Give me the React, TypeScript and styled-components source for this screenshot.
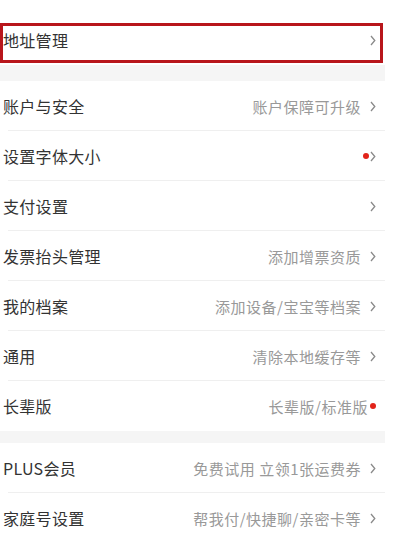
import React from "react";
import styled, { createGlobalStyle } from "styled-components";

const Global = createGlobalStyle`
  html, body { margin: 0; padding: 0; background: #fff; }
  body { font-family: "Noto Sans CJK SC", "Noto Sans", sans-serif; }
`;

const Page = styled.div`
  width: 400px;
  height: 543px;
  overflow: hidden;
  background: #fff;
  padding-top: 15px;
  box-sizing: border-box;
`;

const Column = styled.div`
  width: 385px;
`;

const Band = styled.div<{ $h: number }>`
  height: ${(p) => p.$h}px;
  background: #f5f5f5;
`;

const Row = styled.div<{ $divider?: boolean; $highlight?: boolean }>`
  position: relative;
  height: 50px;
  display: flex;
  align-items: center;
  padding: 0 9px 0 3px;
  box-sizing: border-box;
  background: #fff;
  ${(p) =>
    p.$divider
      ? `&::after { content: ""; position: absolute; left: 8px; right: 0; bottom: 0; height: 1px; background: #efefef; }`
      : ""}
  ${(p) =>
    p.$highlight
      ? `&::before { content: ""; position: absolute; left: 0; right: 2px; top: 8px; bottom: 2px; border: 3px solid #b8161b; box-sizing: border-box; }`
      : ""}
`;

const Label = styled.span`
  flex: 1;
  font-size: 16px;
  color: #333;
  letter-spacing: 0.3px;
`;

const Value = styled.span`
  font-size: 15px;
  color: #999;
  letter-spacing: 0.5px;
`;

const Dot = styled.span`
  width: 6px;
  height: 6px;
  border-radius: 50%;
  background: #e2231a;
  margin-left: 2px;
`;

const ChevronWrap = styled.span<{ $gap: number }>`
  display: inline-flex;
  margin-left: ${(p) => p.$gap}px;
`;

const Chevron = ({ gap = 10 }: { gap?: number }) => (
  <ChevronWrap $gap={gap}>
    <svg width="6" height="11" viewBox="0 0 6 11">
      <polyline points="1,1 4.8,5.5 1,10" fill="none" stroke="#8a8a8a" strokeWidth="1.3" />
    </svg>
  </ChevronWrap>
);

type Item = { label: string; value?: string; dot?: boolean; chevron?: boolean };

const group1: Item[] = [
  { label: "账户与安全", value: "账户保障可升级", chevron: true },
  { label: "设置字体大小", dot: true, chevron: true },
  { label: "支付设置", chevron: true },
  { label: "发票抬头管理", value: "添加增票资质", chevron: true },
  { label: "我的档案", value: "添加设备/宝宝等档案", chevron: true },
  { label: "通用", value: "清除本地缓存等", chevron: true },
  { label: "长辈版", value: "长辈版/标准版", dot: true },
];

const group2: Item[] = [
  { label: "PLUS会员", value: "免费试用 立领1张运费券", chevron: true },
  { label: "家庭号设置", value: "帮我付/快捷聊/亲密卡等", chevron: true },
];

const renderRow = (it: Item, i: number, arr: Item[]) => (
  <Row key={it.label} $divider={i < arr.length - 1}>
    <Label>{it.label}</Label>
    {it.value && <Value>{it.value}</Value>}
    {it.dot && <Dot />}
    {it.chevron && <Chevron gap={it.dot ? 1 : 9} />}
  </Row>
);

export default function App() {
  return (
    <Page>
      <Global />
      <Column>
        <Row $highlight>
          <Label>地址管理</Label>
          <Chevron />
        </Row>
        <Band $h={16} />
        {group1.map(renderRow)}
        <Band $h={12} />
        {group2.map(renderRow)}
      </Column>
    </Page>
  );
}
